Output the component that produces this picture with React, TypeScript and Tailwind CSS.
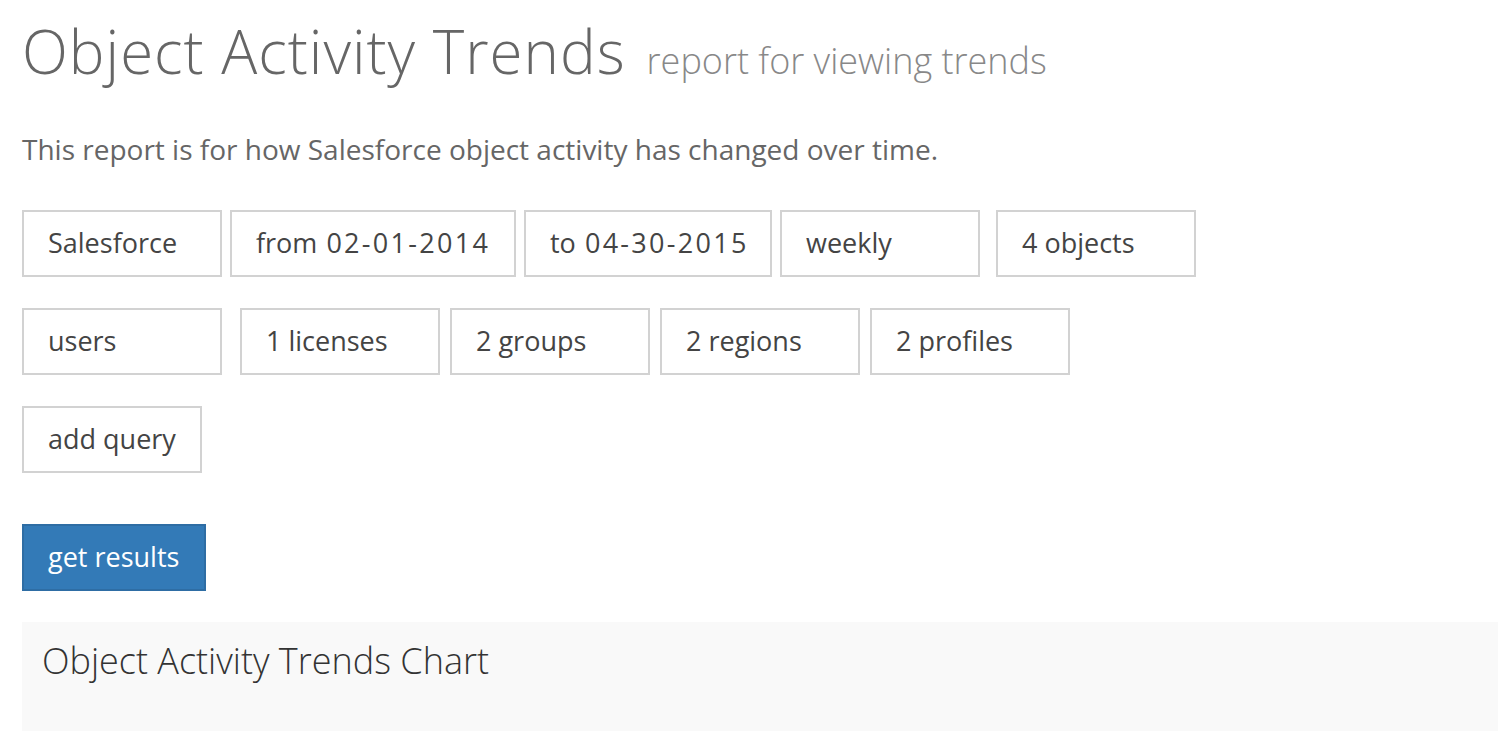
export default function App() {
  const row1 = [
    { label: "Salesforce", cls: "w-[200px] mr-[8px]" },
    { label: "from", date: "02-01-2014", cls: "w-[286px] mr-[8px]" },
    { label: "to", date: "04-30-2015", cls: "w-[248px] mr-[8px]" },
    { label: "weekly", cls: "w-[200px] mr-[16px]" },
    { label: "4 objects", cls: "w-[200px]" },
  ];
  const row2 = [
    { label: "users", cls: "w-[200px] mr-[18px]" },
    { label: "1 licenses", cls: "w-[200px] mr-[10px]" },
    { label: "2 groups", cls: "w-[200px] mr-[10px]" },
    { label: "2 regions", cls: "w-[200px] mr-[10px]" },
    { label: "2 profiles", cls: "w-[200px]" },
  ];

  const box =
    "h-[67px] border-2 border-[#d2d2d2] bg-white pl-[24px] flex items-center text-[27px] text-[#444] shrink-0 whitespace-pre";

  return (
    <div className="min-h-screen bg-white pl-[22px] pt-[15px] font-['Open_Sans',sans-serif]">
      {/* Header */}
      <h1 className="flex items-baseline gap-[21px] text-[#666]">
        <span className="text-[60px] font-light tracking-[1px] leading-[72px]">Object Activity Trends</span>
        <span className="text-[36px] font-light text-[#888]">report for viewing trends</span>
      </h1>

      <p className="mt-[40px] text-[28px] text-[#666]">
        This report is for how Salesforce object activity has changed over time.
      </p>

      {/* Query filters */}
      <div className="mt-[40px] flex">
        {row1.map((b) => (
          <div key={b.label} className={`${box} ${b.cls}`}>
            {b.label}
            {b.date && (
              <>
                <span className="tracking-[2px]"> </span>
                <span className="tracking-[2.3px]">{b.date}</span>
              </>
            )}
          </div>
        ))}
      </div>
      <div className="mt-[31px] flex">
        {row2.map((b) => (
          <div key={b.label} className={`${box} ${b.cls}`}>
            {b.label}
          </div>
        ))}
      </div>
      <div className="mt-[31px] flex">
        <div className={`${box} w-[180px]`}>add query</div>
      </div>

      <button className="mt-[51px] h-[67px] w-[184px] bg-[#337ab7] border-2 border-[#2e6da4] text-white text-[27px] pl-[24px] text-left">
        get results
      </button>

      {/* Chart panel */}
      <div className="mt-[31px] h-[109px] bg-[#f9f9f9] pl-[20px] pt-[12px]">
        <div className="text-[36px] font-light text-[#333]">Object Activity Trends Chart</div>
      </div>
    </div>
  );
}
